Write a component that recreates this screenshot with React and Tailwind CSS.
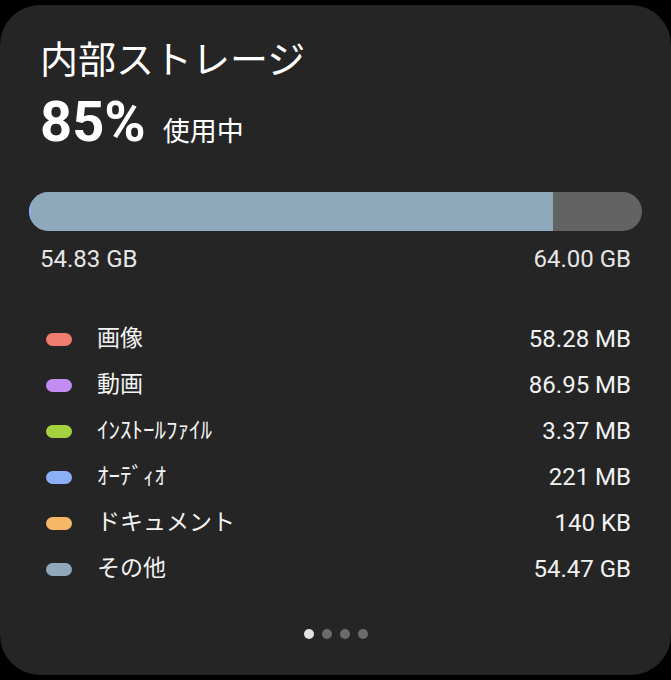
import React from 'react';

const items = [
  { label: '画像', value: '58.28 MB', color: 'bg-[#f07b6f]' },
  { label: '動画', value: '86.95 MB', color: 'bg-[#c28cf2]' },
  { label: 'ｲﾝｽﾄｰﾙﾌｧｲﾙ', value: '3.37 MB', color: 'bg-[#a3d13f]' },
  { label: 'ｵｰﾃﾞｨｵ', value: '221 MB', color: 'bg-[#8cb0f7]' },
  { label: 'ドキュメント', value: '140 KB', color: 'bg-[#f6b866]' },
  { label: 'その他', value: '54.47 GB', color: 'bg-[#8fa9bb]' },
];

const font = { fontFamily: 'Roboto, "Noto Sans CJK JP", sans-serif' };

export default function App() {
  return (
    <div className="w-[671px] h-[680px] bg-black pt-[5px] overflow-hidden" style={font}>
      <div className="h-[670px] bg-[#252525] rounded-[40px] px-[40px] pt-[30px] text-white">
        <h1 className="text-[38px] leading-[50px] font-normal">内部ストレージ</h1>
        <div className="flex items-baseline mt-[9px] h-[56px]">
          <span className="text-[56px] leading-[56px] font-bold">85%</span>
          <span className="text-[27px] ml-[17px]">使用中</span>
        </div>

        <div className="-mx-[11px] mt-[42px] h-[39px] rounded-full bg-[#636363] overflow-hidden flex">
          <div className="w-[2px] bg-[#8cb0f7]" />
          <div className="w-[522px] bg-[#8fa9bc]" />
        </div>
        <div className="flex justify-between mt-[13px] text-[24px] leading-[30px] text-[#e6e6e6]">
          <span>54.83 GB</span>
          <span>64.00 GB</span>
        </div>

        <ul className="mt-[42px] flex flex-col">
          {items.map((it) => (
            <li key={it.label} className="flex items-center h-[46px]">
              <span className={`w-[26px] h-[13px] rounded-full ml-[6px] ${it.color}`} />
              <span className="ml-[25px] text-[23px] text-[#f2f2f2]">{it.label}</span>
              <span className="ml-auto text-[24px] text-[#f2f2f2]">{it.value}</span>
            </li>
          ))}
        </ul>

        <div className="flex justify-center gap-[8px] mt-[37px]">
          <span className="w-[10px] h-[10px] rounded-full bg-[#e2e2e2]" />
          <span className="w-[10px] h-[10px] rounded-full bg-[#6b6b6b]" />
          <span className="w-[10px] h-[10px] rounded-full bg-[#6b6b6b]" />
          <span className="w-[10px] h-[10px] rounded-full bg-[#6b6b6b]" />
        </div>
      </div>
    </div>
  );
}
